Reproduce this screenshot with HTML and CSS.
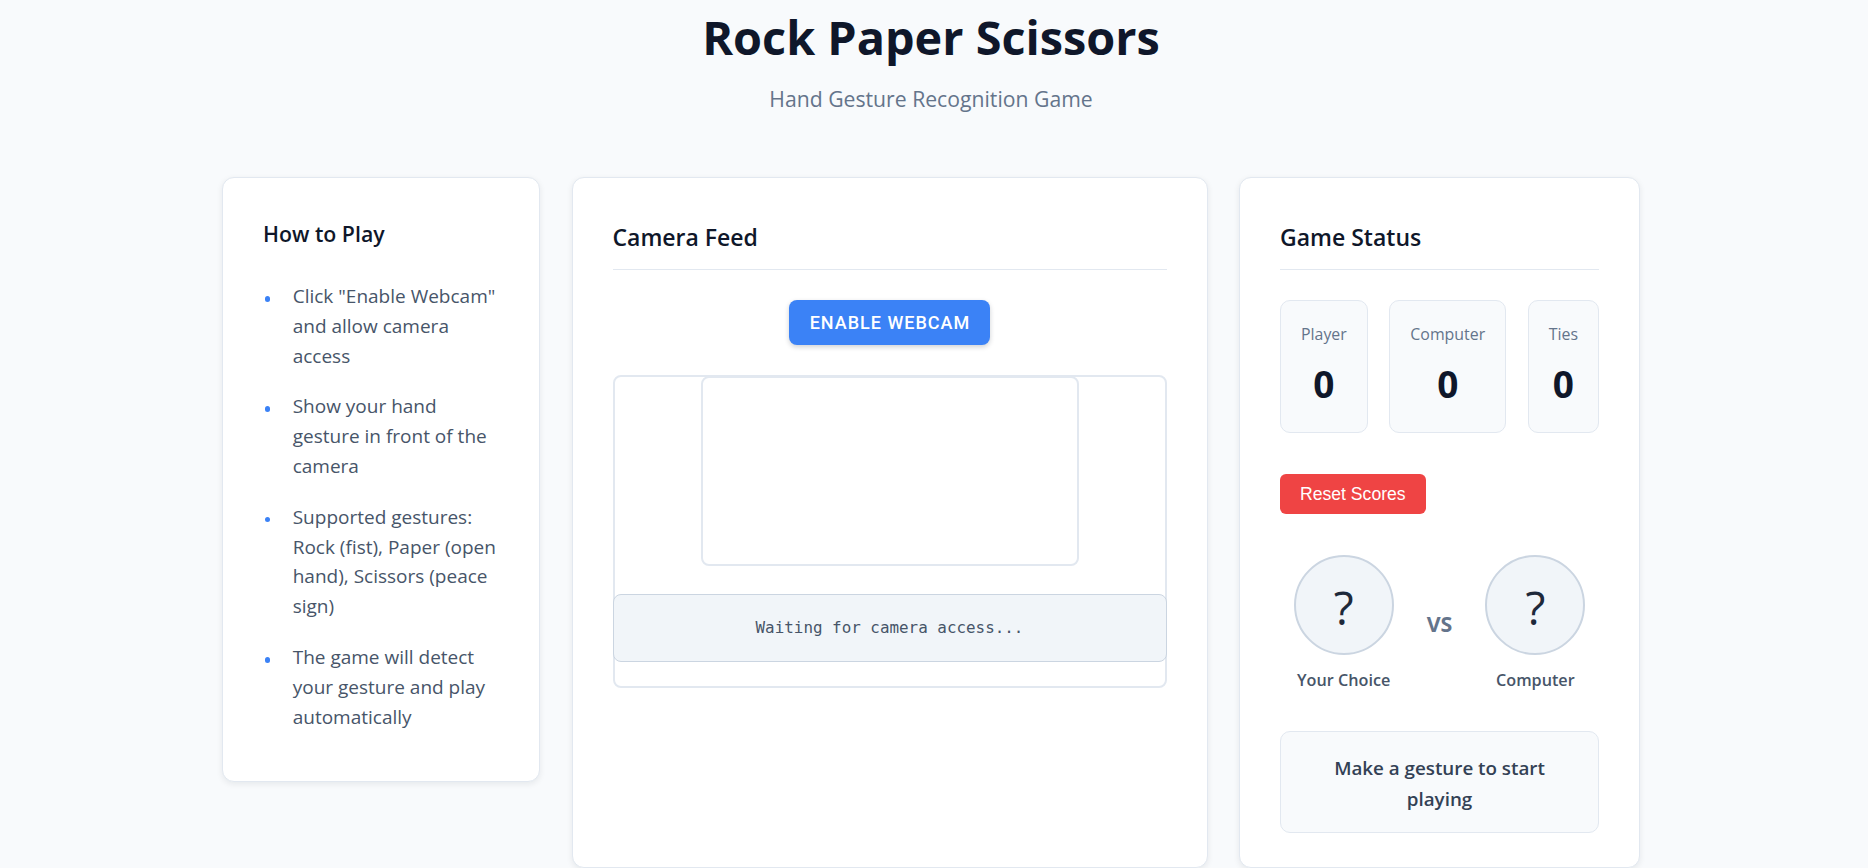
FILE: index.html
```html
<!DOCTYPE html>
<html lang="en">
<head>
<meta charset="utf-8">
<title>Rock Paper Scissors</title>
<link rel="stylesheet" href="styles.css">
</head>
<body>
<div class="page">
  <header class="header">
    <h1 class="title">Rock Paper Scissors</h1>
    <p class="subtitle">Hand Gesture Recognition Game</p>
  </header>

  <main class="grid">
    <section class="card card-help">
      <h3 class="help-title">How to Play</h3>
      <ul class="help-list">
        <li>Click "Enable Webcam" and allow camera access</li>
        <li>Show your hand gesture in front of the camera</li>
        <li>Supported gestures: Rock (fist), Paper (open hand), Scissors (peace sign)</li>
        <li>The game will detect your gesture and play automatically</li>
      </ul>
    </section>

    <section class="card card-camera">
      <h2 class="card-title">Camera Feed</h2>
      <div class="btn-row">
        <button class="btn-webcam">ENABLE WEBCAM</button>
      </div>
      <div class="camera-box">
        <div class="video-box"></div>
        <div class="status">Waiting for camera access...</div>
      </div>
    </section>

    <section class="card card-status">
      <h2 class="card-title">Game Status</h2>
      <div class="scores">
        <div class="score-box"><div class="score-label">Player</div><div class="score-value">0</div></div>
        <div class="score-box"><div class="score-label">Computer</div><div class="score-value">0</div></div>
        <div class="score-box"><div class="score-label">Ties</div><div class="score-value">0</div></div>
      </div>
      <button class="btn-reset">Reset Scores</button>
      <div class="choices">
        <div class="choice">
          <div class="choice-circle">?</div>
          <div class="choice-label">Your Choice</div>
        </div>
        <div class="vs">VS</div>
        <div class="choice">
          <div class="choice-circle">?</div>
          <div class="choice-label">Computer</div>
        </div>
      </div>
      <div class="message">Make a gesture to start playing</div>
    </section>
  </main>
</div>
</body>
</html>
```
FILE: styles.css
```css
* { box-sizing: border-box; }

html, body {
  margin: 0;
  padding: 0;
  background: #f8fafc;
}

body {
  font-family: "Open Sans", "Noto Sans", sans-serif;
  color: #0f172a;
}

.page {
  padding: 9px 6px 0 0;
}

.header {
  text-align: center;
}

.title {
  margin: 0;
  font-size: 46.8px;
  line-height: 56px;
  font-weight: 700;
  color: #0f172a;
}

.subtitle {
  margin: 19px 0 0;
  font-size: 21.2px;
  line-height: 30px;
  color: #64748b;
}

.grid {
  display: grid;
  grid-template-columns: 318px 636px 401px;
  column-gap: 31.5px;
  justify-content: center;
  margin-top: 62.6px;
}

.card {
  background: #ffffff;
  border: 1px solid #e2e8f0;
  border-radius: 12px;
  box-shadow: 0 2px 6px rgba(15, 23, 42, 0.08);
  padding: 40px;
}

.card-help {
  align-self: start;
}

.help-title {
  margin: 0;
  font-size: 21.3px;
  line-height: 31px;
  font-weight: 600;
  color: #0f172a;
}

.help-list {
  list-style: none;
  margin: 33.5px 0 9px;
  padding: 0;
}

.help-list li {
  position: relative;
  padding-left: 29.7px;
  font-size: 19px;
  line-height: 29.8px;
  color: #475569;
}

.help-list li + li {
  margin-top: 21px;
}

.help-list li::before {
  content: "";
  position: absolute;
  left: 1.5px;
  top: 14px;
  width: 5.5px;
  height: 5.5px;
  border-radius: 50%;
  background: #3b82f6;
}

.card-title {
  margin: 0;
  padding-bottom: 13px;
  border-bottom: 1px solid #e2e8f0;
  font-size: 23px;
  line-height: 38px;
  font-weight: 600;
  color: #0f172a;
}

.btn-row {
  display: flex;
  justify-content: center;
  margin-top: 30px;
}

.btn-webcam {
  font-family: "Roboto", sans-serif;
  font-weight: 500;
  font-size: 18px;
  line-height: 21px;
  letter-spacing: 1px;
  color: #ffffff;
  background: #3b82f6;
  border: none;
  border-radius: 8px;
  padding: 12px 20px 12px 21px;
  box-shadow: 0 2px 5px rgba(15, 23, 42, 0.2);
}

.camera-box {
  margin-top: 30.3px;
  border: 2px solid #e2e8f0;
  border-radius: 8px;
  padding-bottom: 24.6px;
}

.video-box {
  width: 378px;
  height: 190px;
  margin: -1px auto 0;
  border: 2px solid #e2e8f0;
  border-radius: 8px;
  background: #ffffff;
}

.status {
  margin: 28.3px -2px 0;
  padding: 20px;
  background: #f1f5f9;
  border: 1px solid #cbd5e1;
  border-radius: 8px;
  text-align: center;
  font-family: "DejaVu Sans Mono", "Liberation Mono", monospace;
  font-size: 15.9px;
  line-height: 25.6px;
  color: #475569;
}

.card-status {
  padding-bottom: 34px;
}

.scores {
  display: flex;
  justify-content: space-between;
  margin-top: 30.7px;
}

.score-box {
  background: #f8fafc;
  border: 1px solid #e2e8f0;
  border-radius: 10px;
  padding: 21px 20px 25.6px;
  text-align: center;
}

.score-label {
  font-size: 15.9px;
  line-height: 24px;
  color: #64748b;
}

.score-value {
  margin-top: 16px;
  font-size: 37px;
  line-height: 44px;
  font-weight: 700;
  color: #0f172a;
}

.btn-reset {
  display: block;
  margin-top: 40.7px;
  font-family: "Liberation Sans", Arial, sans-serif;
  font-size: 17.6px;
  line-height: 20.7px;
  color: #ffffff;
  background: #ef4444;
  border: none;
  border-radius: 6px;
  padding: 10px 20px;
}

.choices {
  display: flex;
  justify-content: center;
  align-items: center;
  gap: 33px;
  margin-top: 41px;
}

.choice {
  display: flex;
  flex-direction: column;
  align-items: center;
}

.choice-circle {
  width: 100px;
  height: 100px;
  border-radius: 50%;
  background: #f1f5f9;
  border: 2px solid #cbd5e1;
  display: flex;
  align-items: center;
  justify-content: center;
  font-size: 46px;
  color: #1e293b;
  padding-top: 3px;
}

.choice-label {
  margin-top: 12.7px;
  font-size: 16.2px;
  line-height: 24px;
  font-weight: 600;
  color: #475569;
}

.vs {
  font-size: 21.4px;
  font-weight: 700;
  color: #64748b;
}

.message {
  margin-top: 39px;
  background: #f8fafc;
  border: 1px solid #e2e8f0;
  border-radius: 10px;
  padding: 20.6px 20px 17.8px;
  text-align: center;
  font-size: 18.8px;
  line-height: 31px;
  font-weight: 600;
  color: #334155;
}
```
